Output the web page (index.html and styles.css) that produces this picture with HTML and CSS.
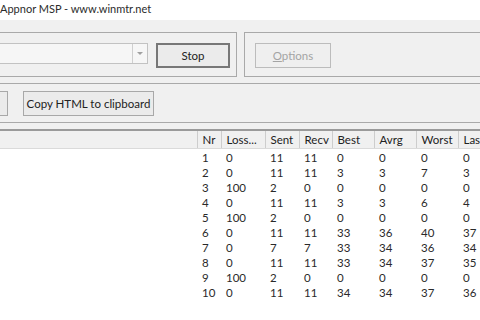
FILE: index.html
```html
<!DOCTYPE html>
<html lang="en">

<head>
    <meta charset="UTF-8">
    <meta name="viewport" content="width=device-width, initial-scale=1.0">
    <title>WinMTR</title>
    <link rel="stylesheet" href="styles.css">
</head>

<body>
    <div class="window">
        <div class="titlebar">
            <span class="title">Appnor MSP - www.winmtr.net</span>
        </div>

        <div class="controls">
            <div class="group group-host">
                <div class="combo">
                    <span class="combo-text"></span>
                    <span class="combo-button"><span class="arrow"></span></span>
                </div>
                <button class="btn btn-default">Stop</button>
            </div>
            <div class="group group-options">
                <button class="btn btn-options" disabled><u>O</u>ptions</button>
            </div>
        </div>

        <div class="export">
            <button class="btn btn-text">Copy Text to clipboard</button>
            <button class="btn btn-html">Copy HTML to clipboard</button>
        </div>

        <div class="list">
            <table>
                <colgroup>
                    <col class="col-host">
                    <col class="col-nr">
                    <col class="col-loss">
                    <col class="col-sent">
                    <col class="col-recv">
                    <col class="col-best">
                    <col class="col-avrg">
                    <col class="col-worst">
                    <col class="col-last">
                </colgroup>
                <thead>
                    <tr>
                        <th>Hostname</th>
                        <th>Nr</th>
                        <th>Loss...</th>
                        <th>Sent</th>
                        <th>Recv</th>
                        <th>Best</th>
                        <th>Avrg</th>
                        <th>Worst</th>
                        <th>Last</th>
                    </tr>
                </thead>
                <tbody id="hops"></tbody>
            </table>
        </div>
    </div>
    <script>
        const hops = [
            [1, 0, 11, 11, 0, 0, 0, 0],
            [2, 0, 11, 11, 3, 3, 7, 3],
            [3, 100, 2, 0, 0, 0, 0, 0],
            [4, 0, 11, 11, 3, 3, 6, 4],
            [5, 100, 2, 0, 0, 0, 0, 0],
            [6, 0, 11, 11, 33, 36, 40, 37],
            [7, 0, 7, 7, 33, 34, 36, 34],
            [8, 0, 11, 11, 33, 34, 37, 35],
            [9, 100, 2, 0, 0, 0, 0, 0],
            [10, 0, 11, 11, 34, 34, 37, 36]
        ];

        const body = document.getElementById('hops');
        hops.forEach(function (hop) {
            const row = document.createElement('tr');
            row.innerHTML = '<td></td>' + hop.map(function (v) {
                return '<td>' + v + '</td>';
            }).join('');
            body.appendChild(row);
        });
    </script>
</body>

</html>
```

FILE: styles.css
```css
html,
body {
    margin: 0;
    padding: 0;
}

body {
    font-family: 'Lato', 'Noto Sans', sans-serif;
    font-size: 11.5px;
    color: #222;
    background-color: #f0f0f0;
    width: 480px;
    height: 320px;
    overflow: hidden;
}

.window {
    width: 480px;
    height: 320px;
    overflow: hidden;
}

.titlebar {
    height: 20px;
    background-color: #fff;
    display: flex;
    align-items: center;
}

.title {
    margin-top: -4px;
    font-size: 11px;
    color: #2b2b2b;
    white-space: nowrap;
}

/* top row: host + options group boxes */
.controls {
    display: flex;
    gap: 7px;
    margin-top: 12px;
}

.group {
    box-sizing: border-box;
    height: 45px;
    border: 1px solid #a9a9a9;
    display: flex;
    align-items: flex-start;
    padding: 10px 6px 0 10px;
    flex-shrink: 0;
}

.group-host {
    width: 257px;
    margin-left: -20px;
    gap: 8px;
}

.group-options {
    width: 300px;
}

.btn {
    box-sizing: border-box;
    height: 25px;
    font-family: inherit;
    font-size: 11.5px;
    color: #222;
    background-color: #ebebeb;
    border: 1px solid #a8a8a8;
    padding: 0;
    white-space: nowrap;
    flex-shrink: 0;
}

.btn-default {
    width: 74px;
    border: 2px solid #777;
}

.btn-options {
    width: 76px;
    color: #a4a4a4;
    border-color: #bcbcbc;
    background-color: #efefef;
}

.combo {
    box-sizing: border-box;
    flex: 1;
    height: 21px;
    background-color: #f6f6f6;
    border: 1px solid #c2c2c2;
    display: flex;
    justify-content: flex-end;
}

.combo-button {
    box-sizing: border-box;
    width: 15px;
    height: 19px;
    border-left: 1px solid #cfcfcf;
    display: flex;
    align-items: center;
    justify-content: center;
}

.arrow {
    width: 0;
    height: 0;
    border-left: 3px solid transparent;
    border-right: 3px solid transparent;
    border-top: 3px solid #a0a0a0;
}

/* second row: export buttons */
.export {
    margin-top: 6px;
    border-top: 1px solid #a9a9a9;
    border-bottom: 1px solid #a9a9a9;
    padding: 7px 0 6px 0;
    display: flex;
    gap: 15px;
}

.btn-text {
    width: 150px;
    margin-left: -142px;
}

.btn-html {
    width: 131px;
}

/* list view */
.list {
    margin-top: 6px;
    border-top: 2px solid #9a9a9a;
    background-color: #fff;
    height: 200px;
}

table {
    table-layout: fixed;
    border-collapse: collapse;
    width: 581px;
    margin-left: -63px;
}

.col-host { width: 260px; }
.col-nr { width: 24px; }
.col-loss { width: 44px; }
.col-sent { width: 34px; }
.col-recv { width: 33px; }
.col-best { width: 42px; }
.col-avrg { width: 42px; }
.col-worst { width: 42px; }
.col-last { width: 60px; }

th,
td {
    padding: 0 0 0 5px;
    text-align: left;
    white-space: nowrap;
    overflow: hidden;
}

th {
    height: 17px;
    font-weight: normal;
    background-color: #f0f0f0;
    border-right: 1px solid #cdcdcd;
    border-bottom: 1px solid #dadada;
    color: #222;
}

tbody tr:first-child td {
    padding-top: 1px;
}

td {
    height: 15px;
    line-height: 15px;
    color: #2a2a2a;
}
```
